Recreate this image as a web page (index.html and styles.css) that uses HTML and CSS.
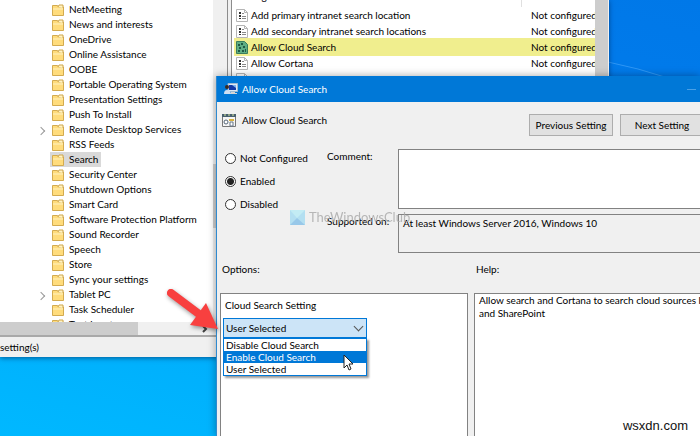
FILE: index.html
```html
<!DOCTYPE html>
<html lang="en">
<head>
<meta charset="UTF-8">
<meta name="viewport" content="width=device-width, initial-scale=1.0">
<title>Allow Cloud Search</title>
<link rel="stylesheet" href="styles.css">
</head>
<body>
<!-- shared icons -->
<svg class="defs" aria-hidden="true">
    <symbol id="folder" viewBox="0 0 12 12">
        <path d="M.5 1.500h5l1 1.500h5v8.500H.5z" fill="#ffdc7c" stroke="#d3ab50"/>
        <path d="M6 3l1-2h4v3" fill="#fff3c4" stroke="#cfa64a"/>
        <path d="M1 4h10v2H1z" fill="#ffe79f"/>
    </symbol>
    <symbol id="policy" viewBox="0 0 12 13">
        <path d="M.5.5h8l3 3v9H.5z" fill="#fff" stroke="#b5b5b5"/>
        <path d="M8.500.5v3h3" fill="none" stroke="#b5b5b5"/>
        <path d="M3 3h2v2H3zM3 6h2v2H3zM3 9h2v1H3z" fill="#333"/>
        <path d="M6 4.500h2M6 7.500h4M6 9.500h4" stroke="#888"/>
    </symbol>
    <symbol id="policy-on" viewBox="0 0 12 13">
        <path d="M.5.5h8l3 3v9H.5z" fill="#5fae84" stroke="#3b7d5c"/>
        <path d="M2 3h2v2H2zM5 2h2v2H5zM3 6h2v2H3zM7 5h2v2H7zM2 9h2v2H2zM6 9h2v2H6zM9 8h1v3H9z" fill="#1f5a44"/>
    </symbol>
</svg>

<div class="desktop">
    <svg class="streak" viewBox="0 0 92 30" aria-hidden="true"><path d="M0 3Q30 9 60 19" fill="none" stroke="#5cb4ff" stroke-opacity=".5"/></svg>

    <!-- Group Policy Editor -->
    <section class="editor">
        <div class="panes">
            <div class="tree-pane">
                <div class="tree-main">
                    <ul class="tree">
                        <li><svg><use href="#folder"/></svg><span>NetMeeting</span></li>
                        <li><svg><use href="#folder"/></svg><span>News and interests</span></li>
                        <li><svg><use href="#folder"/></svg><span>OneDrive</span></li>
                        <li><svg><use href="#folder"/></svg><span>Online Assistance</span></li>
                        <li><svg><use href="#folder"/></svg><span>OOBE</span></li>
                        <li><svg><use href="#folder"/></svg><span>Portable Operating System</span></li>
                        <li><svg><use href="#folder"/></svg><span>Presentation Settings</span></li>
                        <li><svg><use href="#folder"/></svg><span>Push To Install</span></li>
                        <li class="parent"><svg><use href="#folder"/></svg><span>Remote Desktop Services</span></li>
                        <li><svg><use href="#folder"/></svg><span>RSS Feeds</span></li>
                        <li class="current"><svg><use href="#folder"/></svg><span>Search</span></li>
                        <li><svg><use href="#folder"/></svg><span>Security Center</span></li>
                        <li><svg><use href="#folder"/></svg><span>Shutdown Options</span></li>
                        <li><svg><use href="#folder"/></svg><span>Smart Card</span></li>
                        <li><svg><use href="#folder"/></svg><span>Software Protection Platform</span></li>
                        <li><svg><use href="#folder"/></svg><span>Sound Recorder</span></li>
                        <li><svg><use href="#folder"/></svg><span>Speech</span></li>
                        <li><svg><use href="#folder"/></svg><span>Store</span></li>
                        <li><svg><use href="#folder"/></svg><span>Sync your settings</span></li>
                        <li class="parent"><svg><use href="#folder"/></svg><span>Tablet PC</span></li>
                        <li><svg><use href="#folder"/></svg><span>Task Scheduler</span></li>
                        <li><svg><use href="#folder"/></svg><span>Text Input</span></li>
                    </ul>
                    <div class="hscroll"><div class="hthumb"></div><svg viewBox="0 0 8 8"><path d="M2 1l3 3-3 3" fill="none" stroke="#444" stroke-width="2"/></svg></div>
                </div>
                <div class="vscroll"><div class="vthumb"></div></div>
            </div>
            <div class="list-pane">
                <table class="policies">
                    <thead>
                        <tr><th>Setting</th><th>State</th></tr>
                    </thead>
                    <tbody>
                        <tr><td><svg><use href="#policy"/></svg>Add primary intranet search location</td><td>Not configured</td></tr>
                        <tr><td><svg><use href="#policy"/></svg>Add secondary intranet search locations</td><td>Not configured</td></tr>
                        <tr class="marked"><td><svg><use href="#policy-on"/></svg>Allow Cloud Search</td><td>Not configured</td></tr>
                        <tr><td><svg><use href="#policy"/></svg>Allow Cortana</td><td>Not configured</td></tr>
                        <tr><td><svg><use href="#policy"/></svg>Allow Cortana above lock</td><td>Not configured</td></tr>
                    </tbody>
                </table>
                <div class="list-scroll"></div>
            </div>
        </div>
        <div class="status">setting(s)</div>
    </section>

    <!-- Policy dialog -->
    <section class="dialog">
        <header class="titlebar">
            <svg viewBox="0 0 14 12" aria-hidden="true">
                <path d="M4 .5h9.500v8H4z" fill="#dce9f5" stroke="#9fb9d0"/>
                <path d="M5 2h7v5H5z" fill="#1238a8"/>
                <path d="M8 2h4v3z" fill="#7fb2ee"/>
                <path d="M7 9h4v1h2v1H6z" fill="#d5d5d5"/>
                <circle cx="3" cy="4" r="2" fill="#3b2a20"/>
                <path d="M0 11q0-4 3-4t4 4z" fill="#cfdff2"/>
            </svg>
            <h1>Allow Cloud Search</h1>
            <button type="button" class="minimize" aria-label="Minimize"></button>
        </header>

        <div class="heading">
            <svg viewBox="0 0 14 14" aria-hidden="true">
                <path d="M.5 1.500h13v12H.5z" fill="#f5f5f5" stroke="#777"/>
                <path d="M0 1h14v3H0z" fill="#49606f"/>
                <path d="M2 2h2M6 2h2M10 2h2" stroke="#d8e8a0"/>
                <circle cx="4" cy="9" r="2" fill="#fff" stroke="#567"/>
                <path d="M7 6h5v2H7z" fill="#d9b13c"/>
                <path d="M8 9h3v4H8z" fill="#fff" stroke="#678"/>
            </svg>
            <h2>Allow Cloud Search</h2>
            <div class="nav">
                <button type="button">Previous Setting</button>
                <button type="button">Next Setting</button>
            </div>
        </div>

        <form class="form">
            <div class="states">
                <label><input type="radio" name="state">Not Configured</label>
                <label><input type="radio" name="state" checked>Enabled</label>
                <label><input type="radio" name="state">Disabled</label>
            </div>
            <div class="fields">
                <label for="comment">Comment:</label>
                <textarea id="comment"></textarea>
                <label for="supported">Supported on:</label>
                <textarea id="supported" readonly>At least Windows Server 2016, Windows 10</textarea>
            </div>
            <div class="watermark">
                <svg viewBox="0 0 15 15" aria-hidden="true"><path d="M0 0h15v15H0z" fill="#a5dcf2"/><path d="M0 0l7 8 8-8z" fill="#b9ecf5"/><path d="M0 15l7-7 8 7z" fill="#83bfe8"/></svg>
                <span>TheWindowsClub</span>
            </div>
        </form>

        <div class="lower">
            <h3>Options:</h3>
            <h3>Help:</h3>
            <div class="panel options">
                <label for="setting">Cloud Search Setting</label>
                <div class="combo">
                    <select id="setting"><option>User Selected</option></select>
                    <ul class="menu" role="listbox" aria-label="Cloud Search Setting">
                        <li role="option">Disable Cloud Search</li>
                        <li role="option" class="hover">Enable Cloud Search</li>
                        <li role="option">User Selected</li>
                    </ul>
                    <svg class="cursor" viewBox="0 0 11 17" aria-hidden="true"><path d="M1 1v13l3-3 2 5 2-1-2-5h4z" fill="#fff" stroke="#222"/></svg>
                </div>
            </div>
            <div class="panel help">Allow search and Cortana to search cloud sources like OneDrive<br>and SharePoint</div>
        </div>
    </section>

    <svg class="arrow" viewBox="0 0 60 50" aria-hidden="true"><path d="M11 9L39 30" stroke="#f8403f" stroke-width="8" stroke-linecap="round"/><path d="M46 19L58 45 30 41z" fill="#f8403f"/></svg>
    <div class="site">wsxdn.com</div>
</div>
</body>
</html>
```
FILE: styles.css
```css
* {
    box-sizing: border-box;
}
body {
    margin: 0;
    font-family: Lato, "Open Sans", sans-serif;
    font-size: 10px;
    line-height: 15px;
    color: #000;
}
h1, h2, h3, ul {
    margin: 0;
    padding: 0;
    font-size: 10px;
    font-weight: 400;
    list-style: none;
}
button, select, textarea {
    font: inherit;
    color: inherit;
}
svg {
    display: block;
    flex: none;
}
.defs {
    display: none;
}
.desktop {
    position: relative;
    height: 100vh;
    overflow: hidden;
    background: linear-gradient(15deg, #00b8ff 0%, #00aefc 25%, #007cec 75%, #0078e8 100%);
}
.streak {
    position: absolute;
    left: 608px;
    top: 59px;
    width: 92px;
}

/* editor window */
.editor {
    position: absolute;
    left: 0;
    top: 0;
    width: 609px;
    height: 357px;
    display: flex;
    flex-direction: column;
    background: #f0f0f0;
    box-shadow: 0 1px 5px rgba(0, 30, 80, 0.6);
}
.panes {
    flex: 1;
    min-height: 0;
    display: flex;
    gap: 3px;
    border-bottom: 2px solid #a9a9a9;
}
.tree-pane {
    width: 228px;
    display: flex;
    border-right: 1px solid #8c8c8c;
    background: #f0f0f0;
}
.tree-main {
    flex: 1;
    min-width: 0;
    display: flex;
    flex-direction: column;
    background: #fff;
}
.tree {
    flex: 1;
    min-height: 0;
    overflow: hidden;
    padding: 2px 0 0 50px;
}
.tree li {
    position: relative;
    display: flex;
    align-items: center;
    width: max-content;
    height: 15px;
    gap: 5px;
    padding: 0 3px 0 2px;
}
.tree svg {
    width: 12px;
    height: 12px;
}
.tree .current {
    background: #d9d9d9;
}
.parent::before {
    content: "";
    position: absolute;
    left: -12px;
    top: 6px;
    width: 5px;
    height: 5px;
    border: solid #999;
    border-width: 1px 1px 0 0;
    transform: rotate(45deg);
}
.hscroll {
    display: flex;
    align-items: center;
    justify-content: space-between;
    height: 13px;
    padding-right: 4px;
    background: #f0f0f0;
}
.hthumb {
    width: 138px;
    height: 13px;
    background: #cdcdcd;
}
.hscroll svg {
    width: 8px;
    height: 8px;
}
.vscroll {
    width: 14px;
    padding-top: 164px;
}
.vthumb {
    height: 64px;
    background: #cdcdcd;
}
.list-pane {
    flex: 1;
    min-width: 0;
    display: flex;
    overflow: hidden;
    border-left: 1px solid #8c8c8c;
    border-right: 1px solid #f0f0f0;
    background: #fff;
}
.policies {
    flex: 1;
    display: block;
    min-width: 0;
    overflow: hidden;
    padding-left: 3px;
    border-spacing: 0;
}
.policies thead, .policies tbody {
    display: block;
}
.policies tr {
    display: flex;
    height: 16px;
    align-items: center;
}
.policies thead tr {
    height: 7px;
    align-items: stretch;
}
.policies th {
    display: flex;
    align-items: flex-end;
    padding: 0 8px 3px 1px;
    font-weight: 400;
}
.policies th:first-child {
    width: 287px;
    border-right: 1px solid #e0e0e0;
}
.policies th:last-child {
    padding-left: 9px;
}
.policies td {
    display: flex;
    align-items: center;
    gap: 3px;
    padding: 0 0 0 1px;
    white-space: nowrap;
}
.policies td:first-child {
    width: 295px;
    flex: none;
}
.policies svg {
    width: 12px;
    height: 13px;
}
.marked {
    background: #f0ee8e;
    box-shadow: 0 0 0 1px #f0ee8e;
}
.list-scroll {
    width: 13px;
    background: #cdcdcd;
}
.status {
    height: 20px;
    line-height: 20px;
}

/* dialog window */
.dialog {
    position: absolute;
    left: 216px;
    top: 76px;
    right: 0;
    bottom: 0;
    display: flex;
    flex-direction: column;
    overflow: hidden;
    border-left: 1px solid #2f8ad0;
    background: #f0f0f0;
    box-shadow: 0 0 8px rgba(0, 0, 0, 0.35);
}
.titlebar {
    display: flex;
    align-items: center;
    gap: 4px;
    height: 26px;
    padding: 0 4px 0 7px;
    background: #0078d7;
    color: #fff;
}
.titlebar svg {
    width: 14px;
    height: 12px;
}
.minimize {
    width: 9px;
    height: 1px;
    margin-left: auto;
    padding: 0;
    border: 0;
    background: #4aa0e6;
}
.heading {
    display: flex;
    align-items: flex-start;
    gap: 6px;
    height: 40px;
    padding: 11px 0 0 5px;
}
.heading svg {
    width: 14px;
    height: 14px;
}
.nav {
    display: flex;
    gap: 7px;
    margin: 1px -4px 0 auto;
}
.nav button {
    width: 84px;
    height: 22px;
    padding: 0;
    border: 1px solid #adadad;
    background: #e1e1e1;
    white-space: nowrap;
}
.form {
    position: relative;
    display: flex;
    padding: 7px 0 0 8px;
}
.states {
    display: flex;
    flex-direction: column;
    gap: 8px;
    width: 102px;
    padding-top: 2px;
}
.states label {
    display: flex;
    align-items: center;
    gap: 4px;
}
.states input {
    appearance: none;
    width: 11px;
    height: 11px;
    margin: 0;
    border: 1px solid #333;
    border-radius: 50%;
    background: #fff;
}
.states input:checked {
    background: radial-gradient(circle, #222 0 3px, #fff 4px);
}
.fields {
    flex: 1;
    display: grid;
    grid-template-columns: 71px 1fr;
    row-gap: 5px;
    white-space: nowrap;
}
.fields textarea {
    height: 60px;
    width: 100%;
    margin: 0;
    padding: 1px 4px;
    border: 1px solid #828282;
    border-right: 0;
    resize: none;
    overflow: hidden;
    background: #fff;
}
.fields #supported {
    height: 39px;
    background: #f0f0f0;
}
.watermark {
    position: absolute;
    left: 73px;
    top: 68px;
    display: flex;
    align-items: center;
    gap: 4px;
    opacity: 0.8;
    color: #a8a8a8;
    font-size: 13px;
    pointer-events: none;
}
.watermark svg {
    width: 15px;
    height: 15px;
}
.lower {
    flex: 1;
    display: grid;
    grid-template-columns: 248px 1fr;
    grid-template-rows: 31px 1fr;
    column-gap: 6px;
    padding: 9px 0 0 3px;
}
.lower h3 {
    padding-left: 2px;
}
.panel {
    min-width: 0;
    border: 1px solid #828282;
    border-bottom: 0;
    background: #fff;
}
.options {
    padding: 4px 2px;
}
.options label {
    display: block;
    padding: 0 2px 5px;
}
.combo {
    position: relative;
    width: 144px;
}
.combo select {
    appearance: none;
    display: block;
    width: 100%;
    height: 20px;
    padding: 0 2px;
    border: 1px solid #0078d7;
    border-radius: 0;
    background: #cce4f7;
}
.combo::after {
    content: "";
    position: absolute;
    right: 5px;
    top: 5px;
    width: 6px;
    height: 6px;
    border: solid #555;
    border-width: 0 1px 1px 0;
    transform: rotate(45deg);
}
.menu {
    position: absolute;
    left: 0;
    right: 0;
    top: 20px;
    border: 1px solid #0078d7;
    background: #fff;
    box-shadow: 2px 2px 2px rgba(0, 0, 0, 0.4);
}
.menu li {
    height: 12px;
    padding-left: 2px;
    line-height: 12px;
}
.menu .hover {
    background: #0078d7;
    color: #fff;
}
.cursor {
    position: absolute;
    left: 120px;
    top: 36px;
    width: 11px;
    height: 17px;
}
.help {
    padding: 0 4px;
    border-right: 0;
    overflow: hidden;
    line-height: 13px;
    white-space: nowrap;
}

/* marks above the windows */
.arrow {
    position: absolute;
    left: 160px;
    top: 284px;
    width: 60px;
    height: 50px;
    filter: drop-shadow(1px 2px 2px rgba(0, 0, 0, 0.4));
}
.site {
    position: absolute;
    right: 12px;
    bottom: 3px;
    font-family: "Liberation Sans", Arial, sans-serif;
    font-size: 13px;
    color: #111;
}
```
